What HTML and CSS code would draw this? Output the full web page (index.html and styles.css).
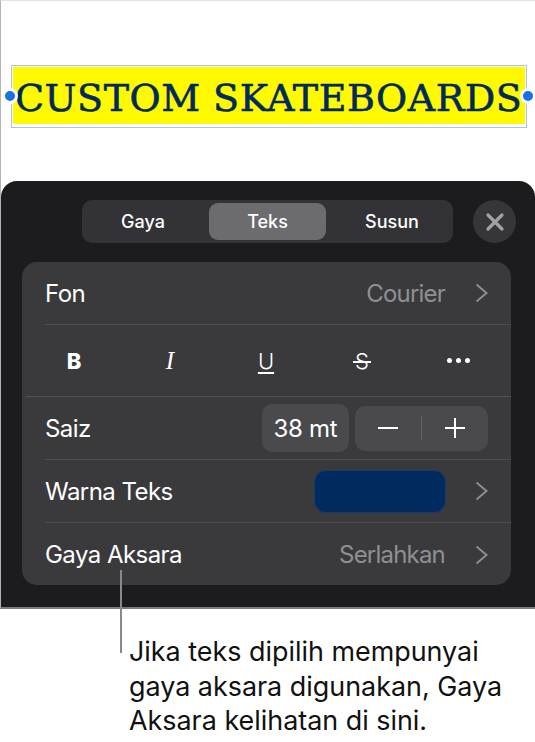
FILE: index.html
```html
<!DOCTYPE html>
<html lang="ms">
<head>
<meta charset="utf-8">
<title>Teks</title>
<link rel="stylesheet" href="styles.css">
</head>
<body>
<div class="page">
  <div class="screen">
    <div class="canvas">
      <div class="selection">
        <div class="highlight"><span class="headline">CUSTOM SKATEBOARDS</span></div>
        <span class="handle handle-left"></span>
        <span class="handle handle-right"></span>
      </div>
    </div>
    <div class="panel">
      <div class="toolbar">
        <div class="segments">
          <div class="segment segment-first">Gaya</div>
          <div class="segment segment-active">Teks</div>
          <div class="segment segment-last">Susun</div>
        </div>
        <div class="close">
          <svg width="20" height="20" viewBox="0 0 20 20"><path d="M3 3 L17 17 M17 3 L3 17" stroke="#a2a2a6" stroke-width="3.2" stroke-linecap="round" fill="none"/></svg>
        </div>
      </div>
      <div class="card">
        <div class="row">
          <span class="label">Fon</span>
          <span class="value">Courier</span>
          <svg class="chevron" width="13" height="20" viewBox="0 0 13 20"><path d="M1.5 1.5 L11.5 10 L1.5 18.5" stroke="#8d8d91" stroke-width="2" fill="none"/></svg>
        </div>
        <div class="row styles">
          <span class="style style-b">B</span>
          <span class="style style-i">I</span>
          <span class="style style-u">U</span>
          <span class="style style-s">&#8202;S&#8202;</span>
          <span class="style dots"><i></i><i></i><i></i></span>
        </div>
        <div class="row">
          <span class="label">Saiz</span>
          <span class="size">38 mt</span>
          <div class="stepper">
            <svg width="20" height="20" viewBox="0 0 20 20"><path d="M0 10 H20" stroke="#fff" stroke-width="2"/></svg>
            <span class="stepper-divider"></span>
            <svg width="20" height="20" viewBox="0 0 20 20"><path d="M0 10 H20 M10 0 V20" stroke="#fff" stroke-width="2"/></svg>
          </div>
        </div>
        <div class="row">
          <span class="label">Warna Teks</span>
          <span class="swatch"></span>
          <svg class="chevron" width="13" height="20" viewBox="0 0 13 20"><path d="M1.5 1.5 L11.5 10 L1.5 18.5" stroke="#8d8d91" stroke-width="2" fill="none"/></svg>
        </div>
        <div class="row">
          <span class="label">Gaya Aksara</span>
          <span class="value">Serlahkan</span>
          <svg class="chevron" width="13" height="20" viewBox="0 0 13 20"><path d="M1.5 1.5 L11.5 10 L1.5 18.5" stroke="#8d8d91" stroke-width="2" fill="none"/></svg>
        </div>
      </div>
    </div>
  </div>
  <p class="note">Jika teks dipilih mempunyai<br>gaya aksara digunakan, Gaya<br>Aksara kelihatan di sini.</p>
  <span class="leader"></span>
</div>
</body>
</html>
```
FILE: styles.css
```css
* { box-sizing: border-box; }
html, body { margin: 0; padding: 0; background: #fff; }
body { font-family: Inter, "Noto Sans", sans-serif; }
.page { position: relative; width: 535px; height: 742px; overflow: hidden; }
.screen { width: 535px; height: 609px; display: flex; flex-direction: column; border-left: 1px solid #b4b4b4; border-top: 1px solid #e4e4e4; border-bottom: 2px solid #7c7c7c; }
.canvas { height: 180px; padding: 64px 0 0 10px; flex: none; }
.selection { position: relative; width: 516px; height: 63px; border: 1px solid #a9c2f2; padding: 1px; }
.highlight { height: 57px; background: #fffa00; white-space: nowrap; display: flex; align-items: center; padding-left: 2px; }
.headline { font-family: "DejaVu Serif", "Liberation Serif", serif; font-size: 38px; letter-spacing: 0.5px; line-height: 57px; color: #002a5e; -webkit-text-stroke: 0.6px #002a5e; position: relative; top: 3px; }
.handle { position: absolute; top: 22px; width: 16px; height: 16px; border-radius: 50%; background: #1a70e6; border: 3px solid #fff; }
.handle-left { left: -10px; }
.handle-right { right: -10px; }
.panel { flex: 1; background: #1c1c1e; border-radius: 16px 16px 0 0; padding: 19px 19px 0 21px; display: flex; flex-direction: column; }
.toolbar { display: flex; align-items: center; padding-left: 60px; gap: 20px; height: 43px; flex: none; }
.segments { width: 371px; height: 43px; background: #333337; border-radius: 10px; display: flex; padding: 3px; }
.segment { flex: 1; color: #fff; font-size: 18px; font-weight: 500; display: flex; align-items: center; justify-content: center; border-radius: 9px; }
.segment-first { padding-right: 8px; }
.segment-last { padding-left: 8px; }
.segment-active { flex: none; width: 117px; background: #6b6b70; }
.close { width: 43px; height: 43px; border-radius: 50%; background: #363639; display: flex; align-items: center; justify-content: center; flex: none; }
.card { margin-top: 19px; width: 489px; height: 323px; background: #3a3a3c; border-radius: 15px; padding-left: 23px; overflow: hidden; }
.row { display: flex; align-items: center; height: 63px; border-bottom: 1px solid #4d4d50; padding-right: 23px; }
.row:last-child { border-bottom: 0; }
.row:nth-child(2) { height: 72px; }
.label { color: #fff; font-size: 24px; letter-spacing: -0.55px; margin-right: auto; }
.value { color: #8f8f93; font-size: 24px; letter-spacing: -0.8px; margin-right: 30px; }
.chevron { flex: none; }
.styles { padding: 0; margin-left: -19px; display: grid; grid-template-columns: repeat(5, 96px); border-bottom-color: #515154; }
.style { color: #fff; font-size: 22px; text-align: center; line-height: 30px; }
.style-b { font-weight: 800; }
.style-i { font-family: "Liberation Serif", serif; font-style: italic; font-size: 25px; }
.style-u { text-decoration: underline; text-underline-offset: 3px; text-decoration-thickness: 1.5px; font-weight: 300; }
.style-s { text-decoration: line-through; text-decoration-thickness: 1.5px; font-weight: 300; }
.dots { display: flex; justify-content: center; align-items: center; gap: 4px; }
.dots i { width: 5px; height: 5px; border-radius: 50%; background: #fff; }
.size { width: 87px; height: 48px; background: #4a4a4d; border-radius: 10px; color: #fff; font-size: 24px; letter-spacing: -0.3px; display: flex; align-items: center; justify-content: center; margin-right: 6px; }
.stepper { width: 133px; height: 45px; background: #4a4a4d; border-radius: 10px; display: flex; align-items: center; justify-content: space-between; padding: 0 23px; }
.stepper-divider { width: 1px; height: 24px; background: #616165; }
.swatch { width: 132px; height: 43px; background: #012a5e; border: 1px solid #1a3a6a; border-radius: 12px; margin-right: 29px; }
.note { position: absolute; left: 129px; top: 634px; margin: 0; font-size: 26.9px; line-height: 34.5px; color: #111; white-space: nowrap; }
.leader { position: absolute; left: 120px; top: 570px; width: 2px; height: 83px; background: #8a8a8a; }
```
